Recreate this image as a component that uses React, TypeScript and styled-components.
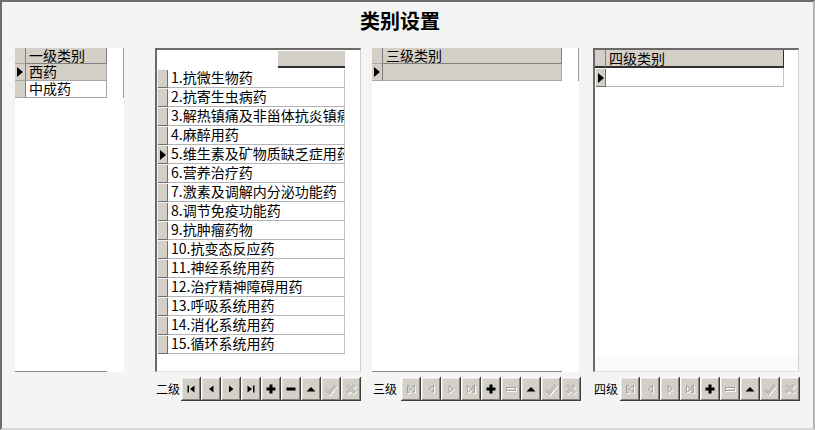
import React from "react";
import styled, { createGlobalStyle } from "styled-components";

const Global = createGlobalStyle`
  html, body { margin: 0; padding: 0; background: #f4f4f4; }
  body { font-family: "Noto Sans CJK SC", "Noto Sans", sans-serif; color: #000; }
`;

const Window = styled.div`
  width: 815px;
  height: 430px;
  box-sizing: border-box;
  background: #f4f4f4;
  border-top: 2px solid #6c6c6c;
  border-left: 2px solid #6c6c6c;
  border-right: 2px solid #b4b4b4;
  border-bottom: 2px solid #dadada;
  display: flex;
  flex-direction: column;
`;

const Title = styled.h1`
  margin: 0;
  height: 46px;
  box-sizing: border-box;
  padding: 6px 15px 0 0;
  text-align: center;
  font-size: 20px;
  font-weight: 700;
  line-height: 26px;
`;

const Panels = styled.div`
  display: flex;
  align-items: flex-start;
  padding-left: 13px;
`;

const Column = styled.div<{ $w: number; $ml: number }>`
  width: ${(p) => p.$w}px;
  margin-left: ${(p) => p.$ml}px;
  display: flex;
  flex-direction: column;
`;

/* ---------- plain grid (levels 1 and 3) ---------- */
const PlainBox = styled.div`
  height: 324px;
  background: #fff;
  display: flex;
  align-items: flex-start;
`;

const PlainTable = styled.div<{ $w: number }>`
  width: ${(p) => p.$w}px;
  height: 324px;
  box-sizing: border-box;
  border-bottom: 1px solid #8a8a8a;
  display: flex;
  flex-direction: column;
`;

const EdgeLine = styled.div<{ $h: number }>`
  width: 1px;
  height: ${(p) => p.$h}px;
  background: #9a9a9a;
  margin-left: auto;
`;

const Row = styled.div<{ $h: number }>`
  display: flex;
  height: ${(p) => p.$h}px;
  flex: none;
`;

const FlatIndicator = styled.div`
  width: 11px;
  flex: none;
  box-sizing: border-box;
  background: #d4d0c8;
  border-right: 1px solid #808080;
  border-bottom: 1px solid #a8a8a8;
  display: flex;
  align-items: center;
  justify-content: center;
`;

const FlatCell = styled.div<{ $sel?: boolean; $head?: boolean }>`
  flex: 1;
  box-sizing: border-box;
  background: ${(p) => (p.$sel || p.$head ? "#d4d0c8" : "#fff")};
  border-right: 1px solid ${(p) => (p.$head ? "#808080" : "#a8a8a8")};
  border-bottom: 1px solid ${(p) => (p.$head ? "#808080" : "#a8a8a8")};
  padding-left: 3px;
  font-size: 14px;
  line-height: 15px;
  white-space: nowrap;
`;

/* ---------- sunken grid (levels 2 and 4) ---------- */
const SunkenBox = styled.div`
  height: 324px;
  box-sizing: border-box;
  background: #fff;
  border-top: 2px solid #6a6a6a;
  border-left: 2px solid #6a6a6a;
  border-right: 1px solid #cfcfcf;
  border-bottom: 1px solid #e2e2e2;
  display: flex;
  flex-direction: column;
`;

const BlankHeader = styled.div`
  height: 19px;
  flex: none;
  display: flex;
  justify-content: flex-end;
  padding-right: 15px;
`;

const HeaderBlock = styled.div`
  width: 67px;
  height: 15px;
  margin-top: 1px;
  background: #d4d0c8;
  border-bottom: 2px solid #303030;
`;

const RaisedIndicator = styled.div`
  width: 11px;
  flex: none;
  box-sizing: border-box;
  background: #d4d0c8;
  box-shadow: inset 1px 1px #f4f4f4, inset -1px -1px #707070;
  display: flex;
  align-items: center;
  justify-content: center;
`;

const HeadIndicator = styled.div`
  width: 11px;
  flex: none;
  box-sizing: border-box;
  background: #d4d0c8;
  border-right: 1px solid #808080;
  border-bottom: 2px solid #303030;
`;

const DataCell = styled.div<{ $w: number; $head?: boolean }>`
  width: ${(p) => p.$w}px;
  flex: none;
  box-sizing: border-box;
  background: ${(p) => (p.$head ? "#d4d0c8" : "#fff")};
  border-bottom: ${(p) => (p.$head ? "2px solid #303030" : "1px solid #b4b4b4")};
  border-right: 1px solid ${(p) => (p.$head ? "#303030" : "#c4c4c4")};
  padding-left: 3px;
  font-size: 14px;
  line-height: 17px;
  white-space: nowrap;
  overflow: hidden;
`;

const BottomShade = styled.div`
  margin-top: auto;
  height: 15px;
  background: #fafafa;
`;

/* ---------- navigator ---------- */
const NavBar = styled.div`
  display: flex;
  align-items: center;
  margin-top: 5px;
  height: 24px;
`;

const NavLabel = styled.span<{ $w: number }>`
  width: ${(p) => p.$w}px;
  flex: none;
  box-sizing: border-box;
  padding-left: 1px;
  font-size: 12px;
  line-height: 24px;
`;

const NavButton = styled.button`
  width: 20px;
  height: 24px;
  flex: none;
  padding: 0;
  margin: 0;
  border: none;
  background: #d4d0c8;
  box-shadow: inset -1px -1px #404040, inset 1px 1px #ffffff, inset -2px -2px #808080,
    inset 2px 2px #e4e4e4;
  display: flex;
  align-items: center;
  justify-content: center;
`;

const Pointer = () => (
  <svg width="6" height="10" viewBox="0 0 6 10">
    <polygon points="0,0 6,5 0,10" fill="#000" />
  </svg>
);

type Kind = "first" | "prior" | "next" | "last" | "insert" | "delete" | "edit" | "post" | "cancel";

const shape = (kind: Kind, props: React.SVGProps<SVGElement>) => {
  const p = props as any;
  switch (kind) {
    case "first":
      return (
        <>
          <rect x="4.5" y="4.5" width="1.5" height="7" {...p} />
          <polygon points="11.5,4.5 7,8 11.5,11.5" {...p} />
        </>
      );
    case "prior":
      return <polygon points="10.5,4.5 6,8 10.5,11.5" {...p} />;
    case "next":
      return <polygon points="6,4.5 10.5,8 6,11.5" {...p} />;
    case "last":
      return (
        <>
          <polygon points="4.5,4.5 9,8 4.5,11.5" {...p} />
          <rect x="10" y="4.5" width="1.5" height="7" {...p} />
        </>
      );
    case "insert":
      return (
        <polygon
          points="6.5,3.5 9.5,3.5 9.5,6.5 12.5,6.5 12.5,9.5 9.5,9.5 9.5,12.5 6.5,12.5 6.5,9.5 3.5,9.5 3.5,6.5 6.5,6.5"
          {...p}
        />
      );
    case "delete":
      return <rect x="3.5" y="6.5" width="9" height="3" {...p} />;
    case "edit":
      return <polygon points="3.5,10.5 8,6 12.5,10.5" {...p} />;
    default:
      return null;
  }
};

const NavIcon = ({ kind, off }: { kind: Kind; off?: boolean }) => {
  if (kind === "post" || kind === "cancel") {
    const d = kind === "post" ? "M3 9 L6.5 12 L13 4" : "M4 4 L12 12 M12 4 L4 12";
    return (
      <svg width="16" height="16" viewBox="0 0 16 16">
        <path d={d} stroke="#ffffff" strokeWidth="3.5" fill="none" transform="translate(0.7,0.7)" />
        <path d={d} stroke="#a8a8a8" strokeWidth="3" fill="none" />
        <path d={d} stroke="#d4d0c8" strokeWidth="1.2" fill="none" />
      </svg>
    );
  }
  return (
    <svg width="16" height="16" viewBox="0 0 16 16">
      {off ? (
        <>
          <g transform="translate(1,1)">{shape(kind, { fill: "none", stroke: "#ffffff", strokeWidth: 1 })}</g>
          <g>{shape(kind, { fill: "none", stroke: "#a0a0a0", strokeWidth: 1 })}</g>
        </>
      ) : (
        shape(kind, { fill: "#000" })
      )}
    </svg>
  );
};

const kinds: Kind[] = ["first", "prior", "next", "last", "insert", "delete", "edit", "post", "cancel"];

const Navigator = ({ label, labelW, disabled }: { label: string; labelW: number; disabled: Kind[] }) => (
  <NavBar>
    <NavLabel $w={labelW}>{label}</NavLabel>
    {kinds.map((k) => (
      <NavButton key={k}>
        <NavIcon kind={k} off={disabled.includes(k)} />
      </NavButton>
    ))}
  </NavBar>
);

const level2 = [
  "1.抗微生物药",
  "2.抗寄生虫病药",
  "3.解热镇痛及非甾体抗炎镇痛药",
  "4.麻醉用药",
  "5.维生素及矿物质缺乏症用药",
  "6.营养治疗药",
  "7.激素及调解内分泌功能药",
  "8.调节免疫功能药",
  "9.抗肿瘤药物",
  "10.抗变态反应药",
  "11.神经系统用药",
  "12.治疗精神障碍用药",
  "13.呼吸系统用药",
  "14.消化系统用药",
  "15.循环系统用药",
];

export default function App() {
  return (
    <>
      <Global />
      <Window>
        <Title>类别设置</Title>
        <Panels>
          <Column $w={109} $ml={0}>
            <PlainBox>
              <PlainTable $w={92}>
                <Row $h={16}>
                  <FlatIndicator />
                  <FlatCell $head>一级类别</FlatCell>
                </Row>
                <Row $h={17}>
                  <FlatIndicator>
                    <Pointer />
                  </FlatIndicator>
                  <FlatCell $sel>西药</FlatCell>
                </Row>
                <Row $h={17}>
                  <FlatIndicator />
                  <FlatCell>中成药</FlatCell>
                </Row>
              </PlainTable>
              <EdgeLine $h={50} />
            </PlainBox>
          </Column>

          <Column $w={206} $ml={31}>
            <SunkenBox>
              <BlankHeader>
                <HeaderBlock />
              </BlankHeader>
              {level2.map((t, i) => (
                <Row $h={19} key={t}>
                  <RaisedIndicator>{i === 4 ? <Pointer /> : null}</RaisedIndicator>
                  <DataCell $w={177}>{t}</DataCell>
                </Row>
              ))}
            </SunkenBox>
            <Navigator label="二级" labelW={26} disabled={["post", "cancel"]} />
          </Column>

          <Column $w={207} $ml={11}>
            <PlainBox>
              <PlainTable $w={190}>
                <Row $h={16}>
                  <FlatIndicator />
                  <FlatCell $head>三级类别</FlatCell>
                </Row>
                <Row $h={17}>
                  <FlatIndicator>
                    <Pointer />
                  </FlatIndicator>
                  <FlatCell $sel></FlatCell>
                </Row>
              </PlainTable>
              <EdgeLine $h={33} />
            </PlainBox>
            <Navigator
              label="三级"
              labelW={29}
              disabled={["first", "prior", "next", "last", "delete", "post", "cancel"]}
            />
          </Column>

          <Column $w={206} $ml={14}>
            <SunkenBox>
              <Row $h={18}>
                <HeadIndicator />
                <DataCell $w={178} $head>
                  四级类别
                </DataCell>
              </Row>
              <Row $h={19}>
                <RaisedIndicator>
                  <Pointer />
                </RaisedIndicator>
                <DataCell $w={178}></DataCell>
              </Row>
              <BottomShade />
            </SunkenBox>
            <Navigator
              label="四级"
              labelW={27}
              disabled={["first", "prior", "next", "last", "delete", "post", "cancel"]}
            />
          </Column>
        </Panels>
      </Window>
    </>
  );
}
